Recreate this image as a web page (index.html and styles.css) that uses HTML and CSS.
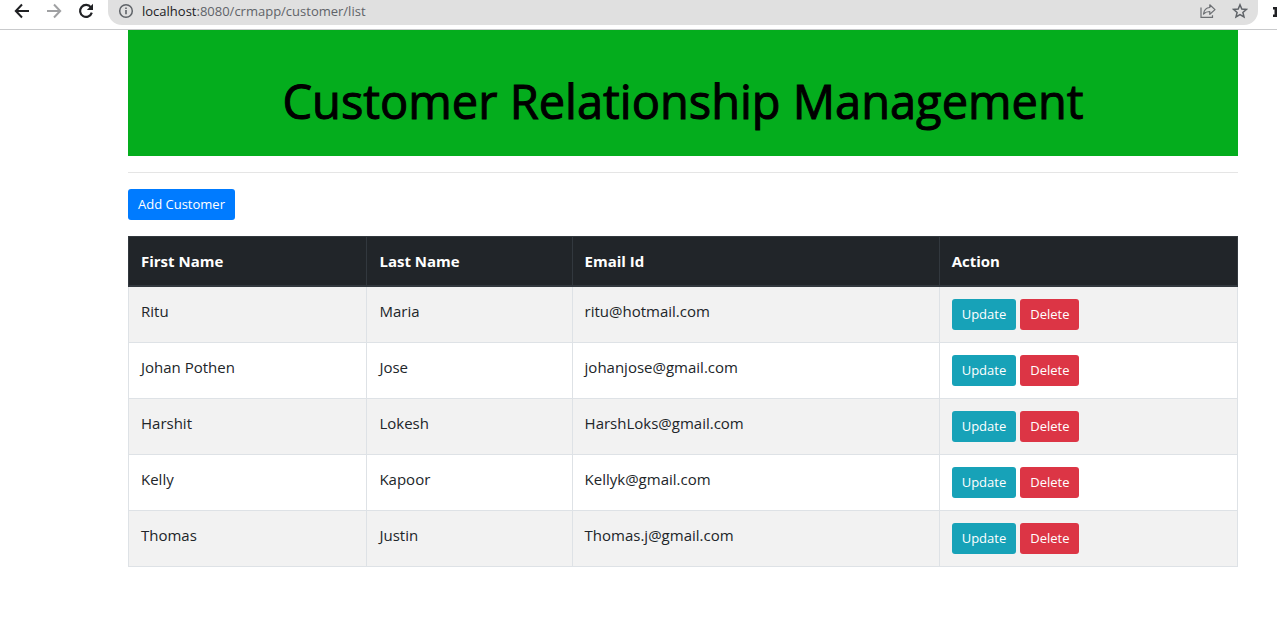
FILE: index.html
```html
<!DOCTYPE html>
<html lang="en">
<head>
<meta charset="utf-8">
<title>Customer Relationship Management</title>
<link rel="stylesheet" href="styles.css">
</head>
<body>
<header class="toolbar">
  <nav class="nav" aria-label="Browser">
    <button class="icon-btn" type="button" aria-label="Back"><svg viewBox="0 0 16 16"><path d="M15 8H2M8 1.500 1.800 8 8 14.500" fill="none" stroke="#202124" stroke-width="2"/></svg></button>
    <button class="icon-btn" type="button" aria-label="Forward"><svg viewBox="0 0 16 16"><path d="M1 8h13M8 1.500 14.200 8 8 14.500" fill="none" stroke="#a0a1a3" stroke-width="2"/></svg></button>
    <button class="icon-btn" type="button" aria-label="Reload"><svg viewBox="0 0 16 16"><path d="M12.900 4.300A6 6 0 1 0 13.800 9.700" fill="none" stroke="#202124" stroke-width="2.200"/><path d="M15 .8V7H8.800z" fill="#202124"/></svg></button>
  </nav>
  <div class="address">
    <svg class="info" viewBox="0 0 16 16"><circle cx="8" cy="8" r="6.300" fill="none" stroke="#5f6368" stroke-width="1.500"/><path d="M8 7v4.300M8 4.400V6" stroke="#5f6368" stroke-width="1.600"/></svg>
    <span class="url"><span class="host">localhost</span>:8080/crmapp/customer/list</span>
    <button class="icon-btn" type="button" aria-label="Share"><svg viewBox="0 0 16 16"><path d="M1 4.500V14.300H12.500V12.300" fill="none" stroke="#6b6e72" stroke-width="1.200"/><path d="M3.500 11C4 7 6 4.800 9.800 4.500V1.800L15 6.600 9.800 11.300V8.500C7 8.500 5.200 9.200 3.500 11z" fill="none" stroke="#6b6e72" stroke-width="1.200" stroke-linejoin="round"/></svg></button>
    <button class="icon-btn" type="button" aria-label="Bookmark"><svg viewBox="0 0 16 16"><path d="M8 1.800 9.800 6l4.600.4-3.500 3 1.100 4.500L8 11.500l-4 2.400 1.100-4.500-3.500-3L6.200 6z" fill="none" stroke="#5f6368" stroke-width="1.500"/></svg></button>
  </div>
  <svg class="extensions" viewBox="0 0 5 16" aria-hidden="true"><path d="M1 3h4v10H1V10.500h1.500v-5H1z" fill="#202124"/></svg>
</header>
<main class="container">
  <h1 class="banner">Customer Relationship Management</h1>
  <hr class="rule">
  <button class="btn btn-primary" type="button">Add Customer</button>
  <table class="customers">
    <colgroup><col class="col-first"><col class="col-last"><col class="col-email"><col class="col-action"></colgroup>
    <thead>
      <tr><th scope="col">First Name</th><th scope="col">Last Name</th><th scope="col">Email Id</th><th scope="col">Action</th></tr>
    </thead>
    <tbody>
      <tr><td>Ritu</td><td>Maria</td><td>ritu@hotmail.com</td><td><div class="actions"><a class="btn btn-info" href="#">Update</a><a class="btn btn-danger" href="#">Delete</a></div></td></tr>
      <tr><td>Johan Pothen</td><td>Jose</td><td>johanjose@gmail.com</td><td><div class="actions"><a class="btn btn-info" href="#">Update</a><a class="btn btn-danger" href="#">Delete</a></div></td></tr>
      <tr><td>Harshit</td><td>Lokesh</td><td>HarshLoks@gmail.com</td><td><div class="actions"><a class="btn btn-info" href="#">Update</a><a class="btn btn-danger" href="#">Delete</a></div></td></tr>
      <tr><td>Kelly</td><td>Kapoor</td><td>Kellyk@gmail.com</td><td><div class="actions"><a class="btn btn-info" href="#">Update</a><a class="btn btn-danger" href="#">Delete</a></div></td></tr>
      <tr><td>Thomas</td><td>Justin</td><td>Thomas.j@gmail.com</td><td><div class="actions"><a class="btn btn-info" href="#">Update</a><a class="btn btn-danger" href="#">Delete</a></div></td></tr>
    </tbody>
  </table>
</main>
</body>
</html>
```
FILE: styles.css
```css
* { box-sizing: border-box; }
body {
  margin: 0;
  background: #fff;
  color: #212529;
  font-family: "Open Sans", "Noto Sans", sans-serif;
  font-size: 15px;
  line-height: 24px;
}
.toolbar {
  display: flex;
  align-items: flex-start;
  border-bottom: 1px solid #c9cacc;
  padding: 0 0 4px 14px;
}
.nav {
  display: flex;
  gap: 16px;
  padding-top: 3px;
  margin-right: 14px;
}
.icon-btn {
  display: block;
  border: 0;
  padding: 0;
  background: none;
  width: 16px;
  height: 16px;
}
.icon-btn svg { display: block; }
.address {
  flex: 1;
  display: flex;
  align-items: center;
  gap: 16px;
  padding: 0 10px 3px;
  background: #e0e0e0;
  border-radius: 0 0 14px 14px;
  height: 25px;
}
.info { width: 16px; height: 16px; }
.url {
  flex: 1;
  margin-left: -8px;
  font-size: 13px;
  line-height: 22px;
  color: #5f6368;
}
.host { color: #202124; }
.extensions {
  width: 5px;
  height: 16px;
  margin: 4px 0 0 14px;
}
.container { margin: 0 39px 0 128px; }
.banner {
  margin: 0;
  padding: 42px 16px 26px;
  background: #04ad1d;
  color: #000;
  font-size: 47px;
  font-weight: 500;
  -webkit-text-stroke: 1px #000;
  line-height: 58px;
  text-align: center;
}
.rule {
  margin: 16px 0;
  border: 0;
  border-top: 1px solid #e5e5e5;
}
.btn {
  display: inline-block;
  border: 0;
  border-radius: 3px;
  padding: 5px 10px;
  color: #fff;
  font-family: inherit;
  font-size: 13px;
  line-height: 21px;
  text-decoration: none;
}
.btn-primary { display: block; background: #007bff; }
.btn-info { background: #17a2b8; }
.btn-danger { background: #dc3545; }
.actions { display: flex; gap: 4px; }
.customers {
  width: 100%;
  margin-top: 16px;
  border-collapse: collapse;
  table-layout: fixed;
}
.col-first { width: 21.5%; }
.col-last { width: 18.5%; }
.col-email { width: 33.1%; }
.col-action { width: 26.9%; }
th, td {
  padding: 12px;
  border: 1px solid #dee2e6;
  text-align: left;
  vertical-align: top;
}
th {
  background: #212529;
  color: #fff;
  border-color: #32383e;
  border-bottom-width: 2px;
  font-weight: 700;
}
tbody tr:nth-child(odd) { background: #f2f2f2; }
```
